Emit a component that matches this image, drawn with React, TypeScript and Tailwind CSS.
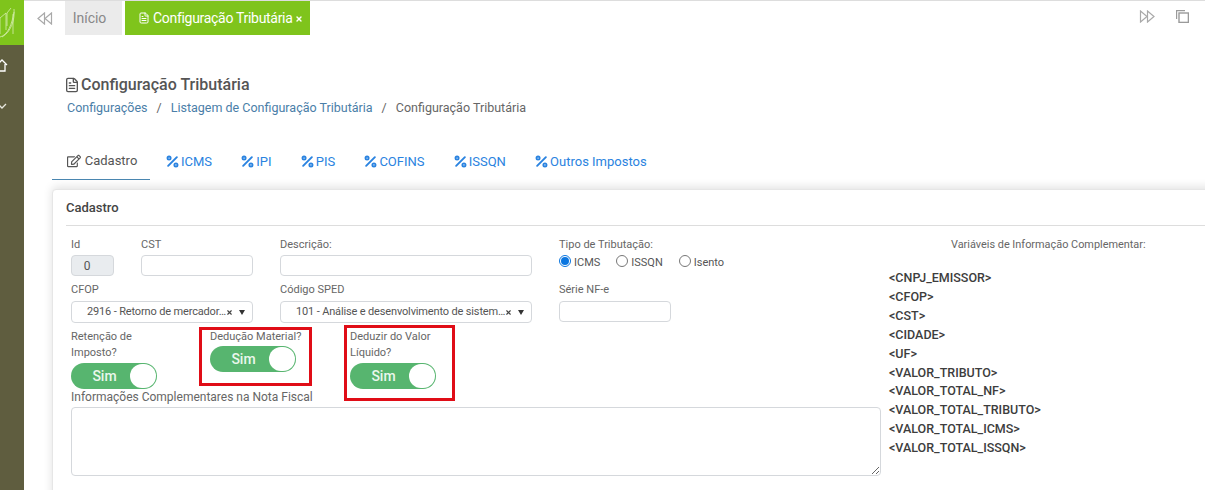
import React from 'react';
import { FileText, Percent, X } from 'lucide-react';
import { FaRegEdit } from 'react-icons/fa';

const tabs = ['ICMS', 'IPI', 'PIS', 'COFINS', 'ISSQN', 'Outros Impostos'];
const variables = [
  '<CNPJ_EMISSOR>',
  '<CFOP>',
  '<CST>',
  '<CIDADE>',
  '<UF>',
  '<VALOR_TRIBUTO>',
  '<VALOR_TOTAL_NF>',
  '<VALOR_TOTAL_TRIBUTO>',
  '<VALOR_TOTAL_ICMS>',
  '<VALOR_TOTAL_ISSQN>',
];

const DoubleArrow: React.FC<{ flip?: boolean }> = ({ flip }) => (
  <svg width="16" height="13" viewBox="0 0 16 13" fill="none" stroke="#a9a9a9" strokeWidth="1.2" className={flip ? 'rotate-180' : ''}>
    <path d="M7.5 1 L1 6.5 L7.5 12 Z" />
    <path d="M14.5 1 L8 6.5 L14.5 12 Z" />
  </svg>
);

const Toggle: React.FC = () => (
  <div className="flex h-[26px] w-[86px] items-center rounded-full bg-[#57b56f] pr-px">
    <span className="flex-1 pl-[8px] text-center text-[14px] font-medium text-[#eaf7ec]">Sim</span>
    <span className="h-[24px] w-[26px] rounded-full bg-white" />
  </div>
);

const SelectBox: React.FC<{ value: string; width: string }> = ({ value, width }) => (
  <div className={`flex h-[22px] items-center rounded border border-[#d5d8dc] pl-[15px] pr-[7px] text-[11px] tracking-[-0.15px] text-[#555] ${width}`}>
    <span className="min-w-0 flex-1 whitespace-nowrap">{value}</span>
    <X size={7} strokeWidth={4} className="mx-px shrink-0 text-[#444]" />
    <span className="ml-[5px] h-0 w-0 shrink-0 border-x-[3.5px] border-t-[5px] border-x-transparent border-t-[#333]" />
  </div>
);

const Radio: React.FC<{ label: string; checked?: boolean }> = ({ label, checked }) => (
  <span className="flex items-center gap-[3px] text-[11px] text-[#555]">
    <span className={`flex h-[12px] w-[12px] -translate-y-[2px] items-center justify-center rounded-full border ${checked ? 'border-[#0b76e0]' : 'border-[#777]'}`}>
      {checked && <span className="h-[8px] w-[8px] rounded-full bg-[#0b76e0]" />}
    </span>
    {label}
  </span>
);

const inputClass = 'block h-[21px] rounded border border-[#d5d8dc]';
const labelClass = 'block h-[16px] text-[11px] leading-[16px] text-[#666]';

export default function App() {
  return (
    <div className="relative flex h-[490px] w-[1205px] overflow-hidden bg-white font-['Roboto',sans-serif]">
      {/* Sidebar */}
      <aside className="flex w-[24px] shrink-0 flex-col overflow-hidden bg-[#5f5d3f]">
        <div className="flex h-[45px] items-end overflow-hidden bg-[#7fc41c]">
          <svg width="24" height="45" viewBox="0 0 24 45" fill="none" stroke="#d5edae" strokeWidth="0.8">
            <path d="M0 37 C8 35 12 24 14 12 M0 34 V18 L6 13 V30 M7 26 V13 L11 8 M13 34 V14 M14 9 C15 20 11 32 2 37" />
          </svg>
        </div>
        <svg width="24" height="14" viewBox="0 0 24 14" fill="none" stroke="#fff" strokeWidth="1.3" className="mt-[14px]">
          <path d="M-3 6 L2 1 L7 6 M5 5 V12 H-2" />
        </svg>
        <svg width="24" height="10" viewBox="0 0 24 10" fill="none" stroke="#e8e8e0" strokeWidth="1.3" className="mt-[28px]">
          <path d="M-2 3 L2 7 L6 3" />
        </svg>
      </aside>

      <main className="min-w-0 flex-1 border-t border-[#ddd]">
        {/* Top tabs */}
        <div className="flex h-[34px] items-stretch">
          <div className="flex w-[41px] items-center justify-center">
            <DoubleArrow />
          </div>
          <div className="flex w-[57px] items-center justify-center bg-[#ebebeb] pr-[8px] text-[14px] text-[#888]">Início</div>
          <div className="ml-[3px] flex w-[185px] items-center bg-[#7fc41c] pl-[13px] text-[14px] tracking-[-0.3px] text-white">
            <FileText size={12} className="mr-[3px]" />
            Configuração Tributária
            <X size={8} strokeWidth={4} className="ml-[2px] mt-[2px]" />
          </div>
          <div className="ml-auto flex items-center gap-[21px] pb-[4px] pr-[16px]">
            <DoubleArrow flip />
            <svg width="13" height="13" viewBox="0 0 13 13" fill="none" stroke="#9a9a9a" strokeWidth="1.2">
              <path d="M0.6 9 V0.6 H9" />
              <rect x="3" y="3" width="9.4" height="9.4" strokeWidth="1.4" />
            </svg>
          </div>
        </div>

        {/* Page heading */}
        <div className="pl-[40px] pt-[40px]">
          <h1 className="flex h-[20px] items-center text-[16px] font-medium leading-[20px] text-[#555]">
            <FileText size={16} className="mr-[1px]" />
            Configuração Tributária
          </h1>
          <nav className="mt-[1px] flex h-[24px] items-center pl-[3px] text-[12.5px] text-[#4a7ea8]">
            <span>Configurações</span>
            <span className="mx-[9px] text-[#666]">/</span>
            <span>Listagem de Configuração Tributária</span>
            <span className="mx-[9px] text-[#666]">/</span>
            <span className="text-[#666]">Configuração Tributária</span>
          </nav>
        </div>

        {/* Section tabs */}
        <div className="ml-[28px] mt-[21px] flex h-[39px] items-center">
          <div className="flex h-full w-[98px] items-center justify-center border-b border-[#4a86b0] pl-[2px] pt-[2px] text-[13px] text-[#555]">
            <FaRegEdit size={14} className="mr-[4px]" />
            Cadastro
          </div>
          <div className="flex gap-[28.2px] pl-[15px] pt-[2px]">
            {tabs.map((tab) => (
              <span key={tab} className="flex items-center text-[13px] text-[#2a83e0]">
                <Percent size={15} strokeWidth={3} className="mr-px" />
                {tab}
              </span>
            ))}
          </div>
        </div>

        {/* Card */}
        <section className="ml-[28px] mt-[9px] h-[320px] w-[1180px] rounded-t border border-[#e6e6e6] bg-white pl-[13px] shadow-[0_-2px_10px_rgba(0,0,0,0.12)]">
          <div className="flex h-[36px] items-center border-b border-[#ddd] text-[13px] font-medium text-[#444]">Cadastro</div>

          <div className="flex pl-[5px] pt-[11px]">
            <div className="w-[818px] shrink-0">
              {/* First row */}
              <div className="flex">
                <div className="mr-[27px] w-[43px]">
                  <label className={labelClass}>Id</label>
                  <div className={`${inputClass} mt-[2px] flex items-center justify-center bg-[#e9ecef] pr-[11px] text-[12px] text-[#555]`}>0</div>
                </div>
                <div className="mr-[27px] w-[112px]">
                  <label className={labelClass}>CST</label>
                  <div className={`${inputClass} mt-[2px]`} />
                </div>
                <div className="mr-[27px] w-[252px]">
                  <label className={labelClass}>Descrição:</label>
                  <div className={`${inputClass} mt-[2px]`} />
                </div>
                <div>
                  <label className={labelClass}>Tipo de Tributação:</label>
                  <div className="mt-[2px] flex gap-[16px]">
                    <Radio label="ICMS" checked />
                    <Radio label="ISSQN" />
                    <Radio label="Isento" />
                  </div>
                </div>
              </div>

              {/* Second row */}
              <div className="mt-[6px] flex">
                <div className="mr-[27px] w-[182px]">
                  <label className={labelClass}>CFOP</label>
                  <div className="mt-[3px]">
                    <SelectBox value="2916 - Retorno de mercador…" width="w-[182px]" />
                  </div>
                </div>
                <div className="mr-[27px] w-[252px]">
                  <label className={labelClass}>Código SPED</label>
                  <div className="mt-[3px]">
                    <SelectBox value="101 - Análise e desenvolvimento de sistem…" width="w-[252px]" />
                  </div>
                </div>
                <div className="w-[112px]">
                  <label className={labelClass}>Série NF-e</label>
                  <div className={`${inputClass} mt-[3px]`} />
                </div>
              </div>

              {/* Third row */}
              <div className="mt-[6px] flex h-[59px] items-start">
                <div className="w-[139px]">
                  <label className={labelClass}>Retenção de<br />Imposto?</label>
                  <div className="mt-[18px]"><Toggle /></div>
                </div>
                <div className="w-[140px]">
                  <label className={labelClass}>Dedução Material?</label>
                  <div className="mt-[1px]"><Toggle /></div>
                </div>
                <div>
                  <label className={labelClass}>Deduzir do Valor<br />Líquido?</label>
                  <div className="mt-[18px]"><Toggle /></div>
                </div>
              </div>

              <label className={`${labelClass} mt-[1px] !text-[12px]`}>Informações Complementares na Nota Fiscal</label>
              <textarea className="mt-[2px] block h-[69px] w-[810px] rounded border border-[#d5d8dc]" />
            </div>

            {/* Variables */}
            <div className="w-[316px] shrink-0">
              <div className="h-[16px] pl-[62px] text-[10.9px] leading-[16px] text-[#666]">Variáveis de Informação Complementar:</div>
              <ul className="mt-[16px] text-[12.5px] font-medium leading-[18.9px] text-[#3d3d3d]">
                {variables.map((v) => (
                  <li key={v}>{v}</li>
                ))}
              </ul>
            </div>
          </div>
        </section>
      </main>

      {/* Red annotation boxes */}
      <div className="absolute left-[199px] top-[327px] h-[59px] w-[113px] border-[3px] border-[#e00d17]" />
      <div className="absolute left-[344px] top-[325px] h-[76px] w-[111px] border-[3px] border-[#e00d17]" />
    </div>
  );
}
